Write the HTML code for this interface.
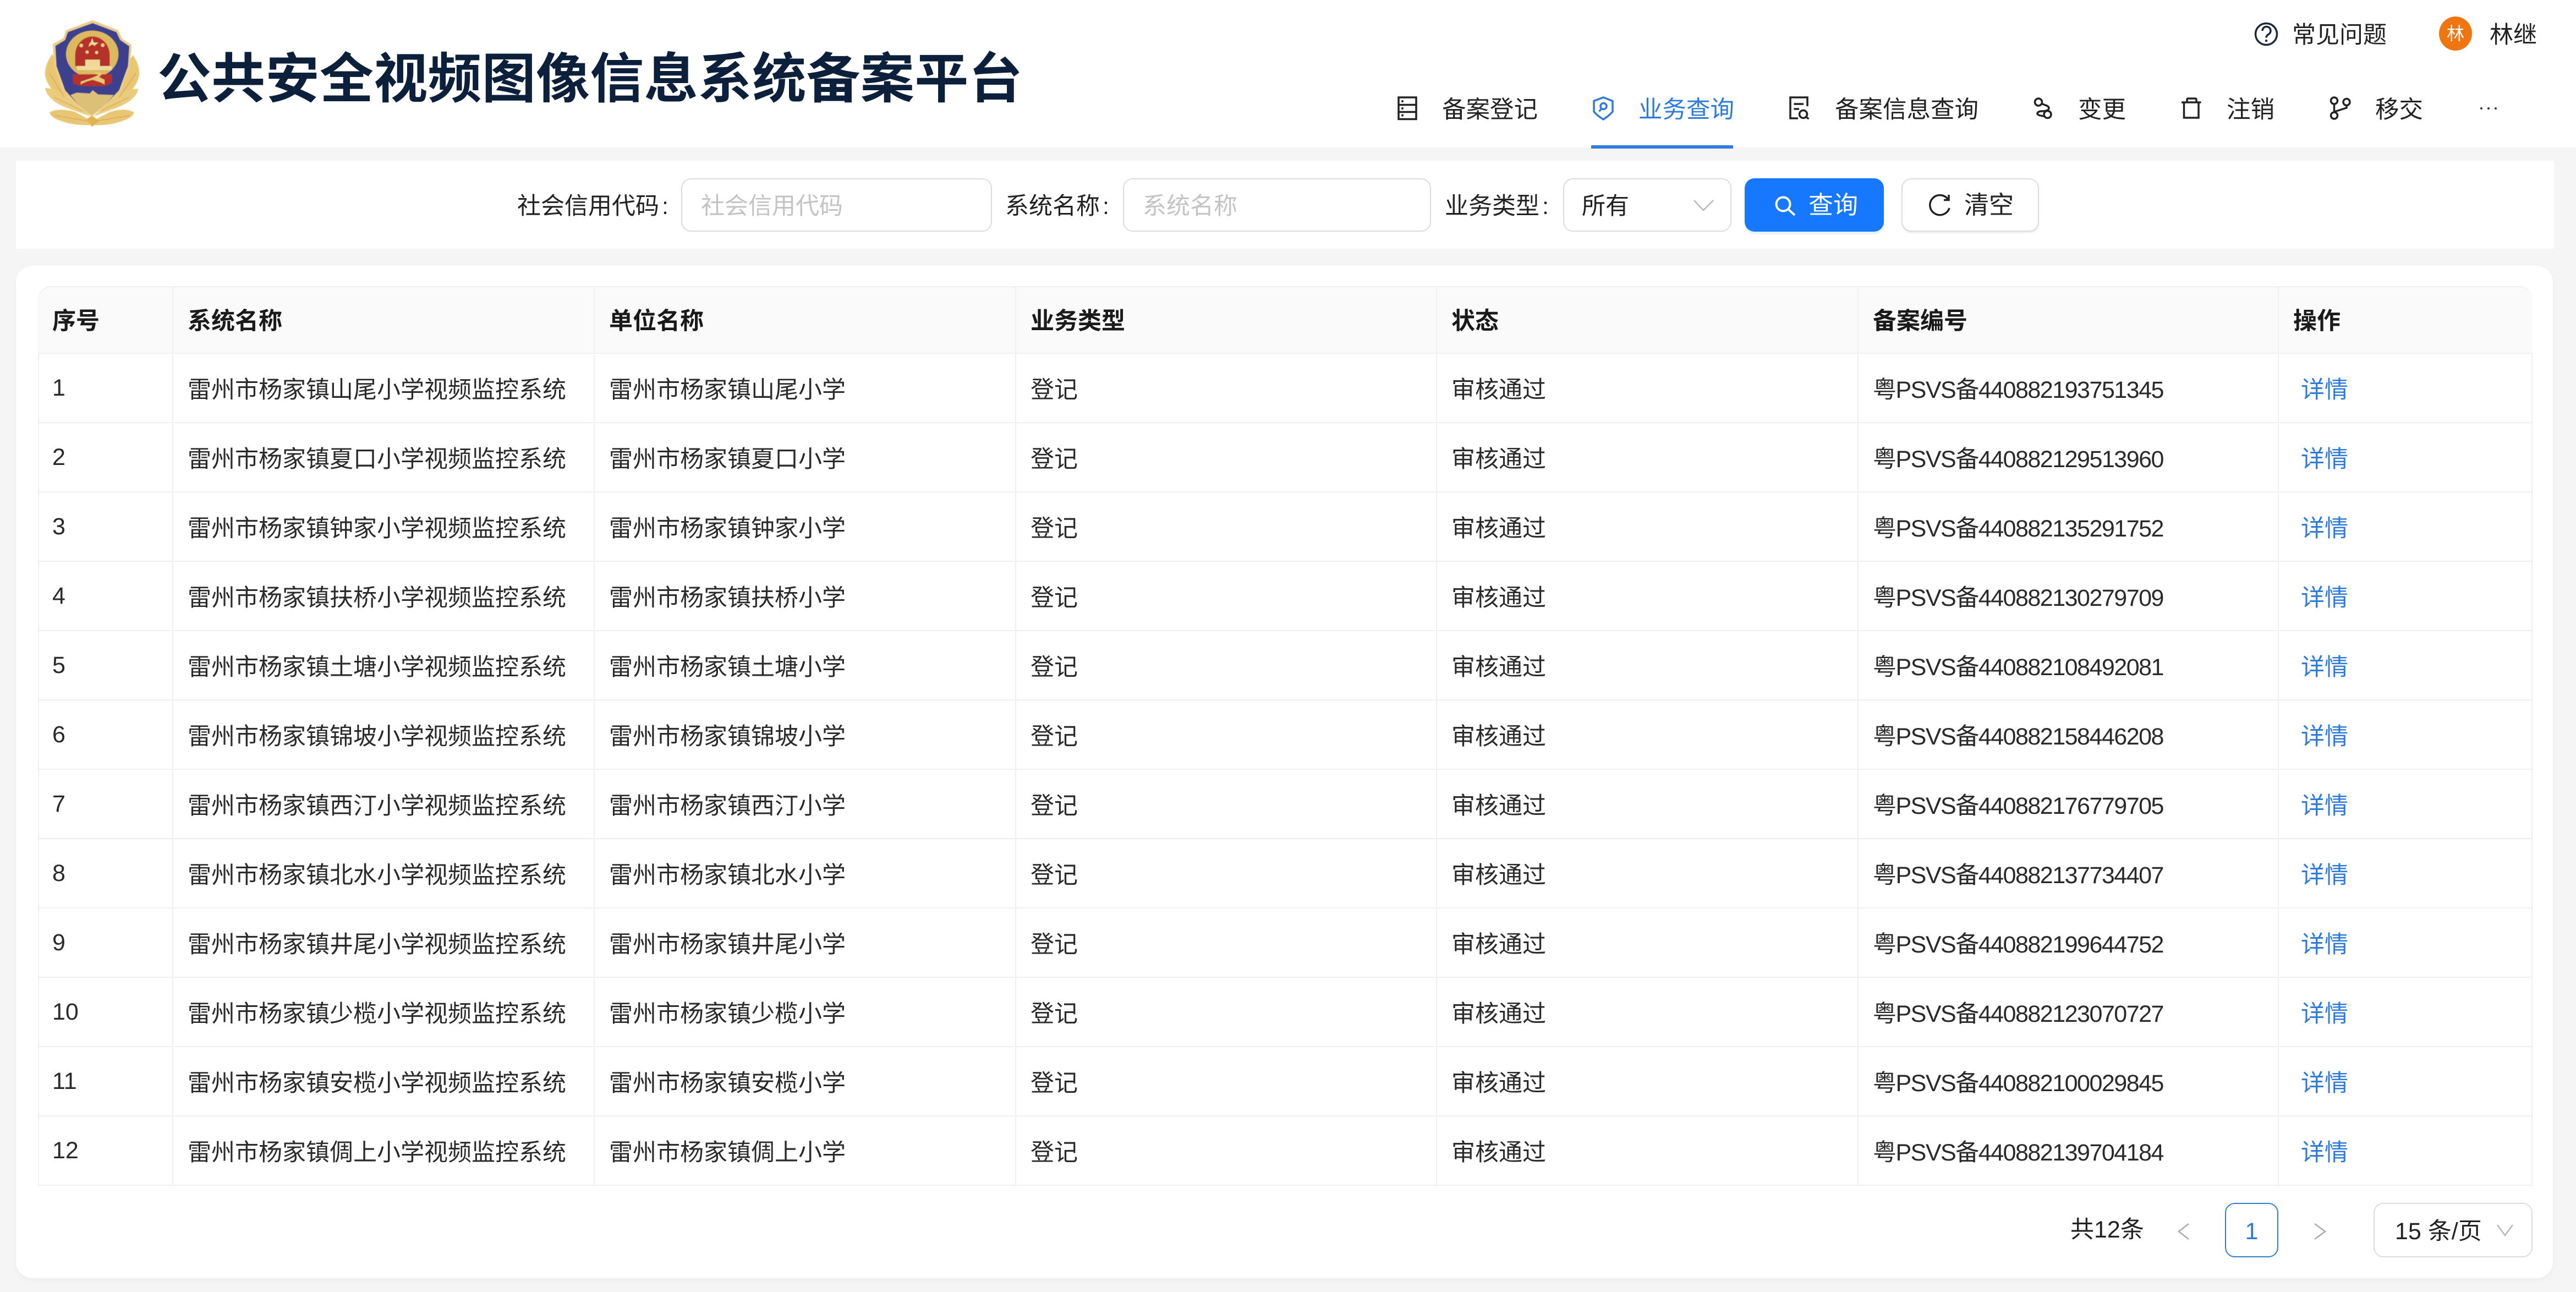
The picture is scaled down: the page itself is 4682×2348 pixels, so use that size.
<!DOCTYPE html>
<html lang="zh-CN"><head><meta charset="utf-8"><title>公共安全视频图像信息系统备案平台</title>
<style>
*{box-sizing:border-box}
html,body{margin:0;padding:0;width:4682px;height:2348px;overflow:hidden;background:#f5f5f5;font-family:"Liberation Sans","Noto Sans CJK SC",sans-serif;color:#222}
.b{position:absolute}
.t{position:absolute;white-space:nowrap;line-height:60px;height:60px;font-size:43px}
.n{font-size:43.500px}
.c{margin-left:5px}
#head{left:0;top:0;width:4682px;height:268px;background:#fff}
#bar{left:29px;top:292px;width:4613px;height:160px;background:#fff}
#card{left:29px;top:483px;width:4611px;height:1840px;background:#fff;border-radius:30px;box-shadow:0 4px 10px rgba(0,0,0,.035)}
.box{position:absolute;background:#fff;border:2.500px solid #dcdcdc;border-radius:18px}
table{position:absolute;left:69px;top:520px;width:4534px;border-collapse:separate;border-spacing:0;table-layout:fixed;font-size:43px}
th{height:123px;background:#fafafa;text-align:left;font-weight:700;padding:0 0 3px 26px;border-top:2px solid #f0f0f0;border-right:2px solid #f0f0f0;border-bottom:2px solid #f0f0f0;color:#1a1a1a}
th:first-child{border-top-left-radius:24px;border-left:2px solid #f5f5f5;padding-left:24px}
th:last-child{border-top-right-radius:24px;border-right:0}
td{height:126px;padding:0 0 1px 26px;border-right:2px solid #f0f0f0;border-bottom:2px solid #f0f0f0;white-space:nowrap;color:#2a2a2a}
td:first-child{border-left:2px solid #f0f0f0;padding:1px 0 0 24px}
td:nth-child(6){letter-spacing:-1.500px}
td:last-child{border-right:2px solid #f0f0f0;padding-left:40px;color:#2f7bd9}
</style></head><body>
<div class="b" id="head"></div>
<div class="b" id="bar"></div>
<div class="b" id="card"></div>

<svg class="b" style="left:40px;top:20px" width="240" height="230" viewBox="0 0 720 690">
<defs><filter id="s"><feGaussianBlur stdDeviation="1.500"/></filter></defs>
<g filter="url(#s)">
<g fill="#e8c673">
<path d="M165 235Q125 290 125 345Q135 420 225 480L290 450Z"/>
<path d="M605 240Q640 290 640 345Q630 420 540 480L475 450Z"/>
</g>
<g fill="#ebcb7c">
<path d="M125 420Q180 420 240 460L375 575L250 530Q140 490 125 420Z"/>
<path d="M635 425Q580 420 520 460L390 575L510 530Q620 490 635 425Z"/>
</g>
<g fill="#e8c673">
<path d="M150 552Q200 525 290 550L380 600L370 622Q280 625 215 600Q160 585 150 552Z"/>
<path d="M612 552Q560 525 480 550L385 600L395 622Q480 625 545 600Q600 585 612 552Z"/>
<path d="M352 590L382 570L420 598L382 632Z" fill="#e0b350"/>
</g>
<g stroke="#c99f45" stroke-width="3" fill="none">
<path d="M175 470L330 545M585 470L430 545M180 570L360 600M590 570L400 600M150 340L230 470M620 340L530 470"/>
</g>
<path d="M385 50L525 105L545 150L598 185L590 300L540 440L470 510L380 575L300 520L225 440L175 300L168 180L225 148L240 105Z" fill="#e9cd8c"/>
<path d="M385 66L515 115L535 158L585 192L578 300L530 432L465 500L380 560L305 510L235 432L188 300L182 190L235 158L250 115Z" fill="#3d3f8d"/>
<path d="M265 458L300 445L370 450L385 432L415 455L500 458L465 500L380 568L305 510Z" fill="#dcc078"/>
<ellipse cx="383" cy="235" rx="143" ry="128" fill="#dcb85f"/>
<path d="M290 300V240A93 100 0 0 1 478 240V300Z" fill="#b5302a"/>
<path d="M278 345H490V392L450 410H320L278 395Z" fill="#b5302a"/>
<path d="M300 300H490V322H300Z" fill="#f0da9c"/>
<path d="M345 265H425V300H345Z" fill="#efd898"/>
<path d="M340 322Q380 320 415 350L380 365L320 385L320 400L350 385L385 375L430 390L450 400V375L420 360L440 340Z" fill="#e8c878"/>
<path d="M383 147L391 172L417 172L396 188L404 195L383 182L362 195L370 172L350 172L375 172Z" fill="#f4dc9c"/>
<g fill="#eccf8a"><circle cx="323" cy="188" r="10"/><circle cx="440" cy="186" r="10"/><circle cx="355" cy="224" r="9"/><circle cx="407" cy="226" r="9"/></g>
</g></svg>

<div class="t" style="left:286px;top:83px;height:120px;line-height:120px;font-size:98px;font-weight:700;color:#0c1f3b;letter-spacing:.3px">公共安全视频图像信息系统备案平台</div>

<div class="b" style="left:4433px;top:30px;width:60px;height:62px;border-radius:50%;background:#ef7510;color:#fff;font-size:32px;line-height:62px;text-align:center">林</div>
<div class="t" style="left:4166px;top:34px">常见问题</div>
<div class="t" style="left:4525px;top:34px">林继</div>

<div class="t n" style="left:2621px;top:170px">备案登记</div>
<div class="t n" style="left:2978px;top:170px;color:#2f7bd9">业务查询</div>
<div class="t n" style="left:3335px;top:170px">备案信息查询</div>
<div class="t n" style="left:3777px;top:170px">变更</div>
<div class="t n" style="left:4047px;top:170px">注销</div>
<div class="t n" style="left:4317px;top:170px">移交</div>
<div class="b" style="left:2892px;top:264px;width:258px;height:6px;background:#2f7bdf"></div>

<div class="t" style="left:940px;top:345px">社会信用代码<span class="c">:</span></div>
<div class="box" style="left:1238px;top:324px;width:565px;height:97px"></div>
<div class="t" style="left:1274px;top:345px;color:#c4c4c4">社会信用代码</div>
<div class="t" style="left:1827px;top:345px">系统名称<span class="c">:</span></div>
<div class="box" style="left:2041px;top:324px;width:560px;height:97px"></div>
<div class="t" style="left:2077px;top:345px;color:#c4c4c4">系统名称</div>
<div class="t" style="left:2626px;top:345px">业务类型<span class="c">:</span></div>
<div class="box" style="left:2841px;top:324px;width:306px;height:97px"></div>
<div class="t" style="left:2875px;top:345px">所有</div>
<div class="b" style="left:3171px;top:324px;width:253px;height:97px;background:#1677ff;border-radius:18px;box-shadow:0 5px 0 #e6f4ff"></div>
<div class="t" style="left:3287px;top:343px;color:#fff;font-size:45px">查询</div>
<div class="box" style="left:3456px;top:324px;width:250px;height:97px;box-shadow:0 3px 0 #f0f0f0"></div>
<div class="t" style="left:3570px;top:343px;font-size:45px">清空</div>

<table>
<colgroup><col style="width:246px"><col style="width:766px"><col style="width:766px"><col style="width:765px"><col style="width:766px"><col style="width:764px"><col style="width:461px"></colgroup>
<tr><th>序号</th><th>系统名称</th><th>单位名称</th><th>业务类型</th><th>状态</th><th>备案编号</th><th>操作</th></tr>
<tr><td>1</td><td>雷州市杨家镇山尾小学视频监控系统</td><td>雷州市杨家镇山尾小学</td><td>登记</td><td>审核通过</td><td>粤PSVS备440882193751345</td><td>详情</td></tr>
<tr><td>2</td><td>雷州市杨家镇夏口小学视频监控系统</td><td>雷州市杨家镇夏口小学</td><td>登记</td><td>审核通过</td><td>粤PSVS备440882129513960</td><td>详情</td></tr>
<tr><td>3</td><td>雷州市杨家镇钟家小学视频监控系统</td><td>雷州市杨家镇钟家小学</td><td>登记</td><td>审核通过</td><td>粤PSVS备440882135291752</td><td>详情</td></tr>
<tr><td>4</td><td>雷州市杨家镇扶桥小学视频监控系统</td><td>雷州市杨家镇扶桥小学</td><td>登记</td><td>审核通过</td><td>粤PSVS备440882130279709</td><td>详情</td></tr>
<tr><td>5</td><td>雷州市杨家镇土塘小学视频监控系统</td><td>雷州市杨家镇土塘小学</td><td>登记</td><td>审核通过</td><td>粤PSVS备440882108492081</td><td>详情</td></tr>
<tr><td>6</td><td>雷州市杨家镇锦坡小学视频监控系统</td><td>雷州市杨家镇锦坡小学</td><td>登记</td><td>审核通过</td><td>粤PSVS备440882158446208</td><td>详情</td></tr>
<tr><td>7</td><td>雷州市杨家镇西汀小学视频监控系统</td><td>雷州市杨家镇西汀小学</td><td>登记</td><td>审核通过</td><td>粤PSVS备440882176779705</td><td>详情</td></tr>
<tr><td>8</td><td>雷州市杨家镇北水小学视频监控系统</td><td>雷州市杨家镇北水小学</td><td>登记</td><td>审核通过</td><td>粤PSVS备440882137734407</td><td>详情</td></tr>
<tr><td>9</td><td>雷州市杨家镇井尾小学视频监控系统</td><td>雷州市杨家镇井尾小学</td><td>登记</td><td>审核通过</td><td>粤PSVS备440882199644752</td><td>详情</td></tr>
<tr><td>10</td><td>雷州市杨家镇少榄小学视频监控系统</td><td>雷州市杨家镇少榄小学</td><td>登记</td><td>审核通过</td><td>粤PSVS备440882123070727</td><td>详情</td></tr>
<tr><td>11</td><td>雷州市杨家镇安榄小学视频监控系统</td><td>雷州市杨家镇安榄小学</td><td>登记</td><td>审核通过</td><td>粤PSVS备440882100029845</td><td>详情</td></tr>
<tr><td>12</td><td>雷州市杨家镇倜上小学视频监控系统</td><td>雷州市杨家镇倜上小学</td><td>登记</td><td>审核通过</td><td>粤PSVS备440882139704184</td><td>详情</td></tr>
</table>

<div class="t" style="left:3763px;top:2205px">共12条</div>
<div class="box" style="left:4044px;top:2186px;width:97px;height:99px;border-color:#2f80c8"></div>
<div class="t" style="left:4044px;top:2208px;width:97px;text-align:center;color:#2f7bd9">1</div>
<div class="box" style="left:4314px;top:2186px;width:289px;height:99px"></div>
<div class="t" style="left:4353px;top:2208px">15 条/页</div>

<svg class="b" style="left:0;top:0" width="4682" height="2348" viewBox="0 0 4682 2348" fill="none" stroke="#222" stroke-width="3.500">
<circle cx="4119" cy="62" r="19.500" stroke="#1b2a3a" stroke-width="3.500"/>
<path d="M4112 56a7.500 7.500 0 1 1 11 6.500c-2.500 1.500-4 3-4 6" stroke="#1b2a3a"/>
<circle cx="4119" cy="74" r="2.200" fill="#1b2a3a" stroke="none"/>
<rect x="2542" y="177" width="32" height="39.500"/>
<path d="M2542 190.500H2574M2542 203.500H2574"/>
<circle cx="2549" cy="184" r="2" fill="#222" stroke="none"/><circle cx="2549" cy="197" r="2" fill="#222" stroke="none"/><circle cx="2549" cy="209.500" r="2" fill="#222" stroke="none"/>
<path d="M2914 177L2931 183.500V203Q2925 210 2914 217Q2903 210 2897 203V183.500Z" stroke="#2f7bd9"/>
<circle cx="2914.500" cy="193" r="5.500" stroke="#2f7bd9"/>
<path d="M2910.500 198L2906.500 202.500" stroke="#2f7bd9"/>
<path d="M3285 193V177H3254V215H3268"/>
<path d="M3260.500 189H3278M3260.500 198H3270"/>
<circle cx="3277.500" cy="207.500" r="7"/>
<path d="M3282.500 212.500L3287.500 216"/>
<circle cx="3705" cy="185.500" r="6.500"/><circle cx="3721.500" cy="208" r="6.500"/>
<path d="M3711 188.500L3720 192Q3726 195 3723 199Q3720 202 3712 202Q3703 202 3703 207Q3704 210 3715 211"/>
<path d="M3965 186H4000.500M3975 186V181Q3975 179 3977 179H3990Q3992 179 3992 181V186M3969.500 186V214H3996V186"/>
<circle cx="4242.500" cy="183" r="6"/><circle cx="4265" cy="185.500" r="6"/><circle cx="4242.500" cy="210" r="6"/>
<path d="M4242.500 189V204M4265 191.500V196L4243 203"/>
<g fill="#333" stroke="none"><circle cx="4510" cy="197" r="2"/><circle cx="4523" cy="197" r="2"/><circle cx="4536" cy="197" r="2"/></g>
<path d="M3079 364L3096 382L3114 364" stroke="#b8b8b8" stroke-width="2.500"/>
<path d="M4539 2226L4553 2245L4567 2226" stroke="#b8b8b8" stroke-width="2.500"/>
<circle cx="3241" cy="371" r="12.500" stroke="#fff" stroke-width="4"/>
<path d="M3250 380L3262 391" stroke="#fff" stroke-width="4"/>
<path d="M3541 363A18 18 0 1 0 3543 378" stroke="#222" stroke-width="3.500"/>
<path d="M3533 363.500L3542 363.500L3542 354" stroke="#222" stroke-width="3.500"/>
<path d="M3978 2224L3960 2238L3978 2252" stroke="#aaa" stroke-width="2.500"/>
<path d="M4207 2224L4226 2238L4207 2252" stroke="#aaa" stroke-width="2.500"/>
</svg>
</body></html>
